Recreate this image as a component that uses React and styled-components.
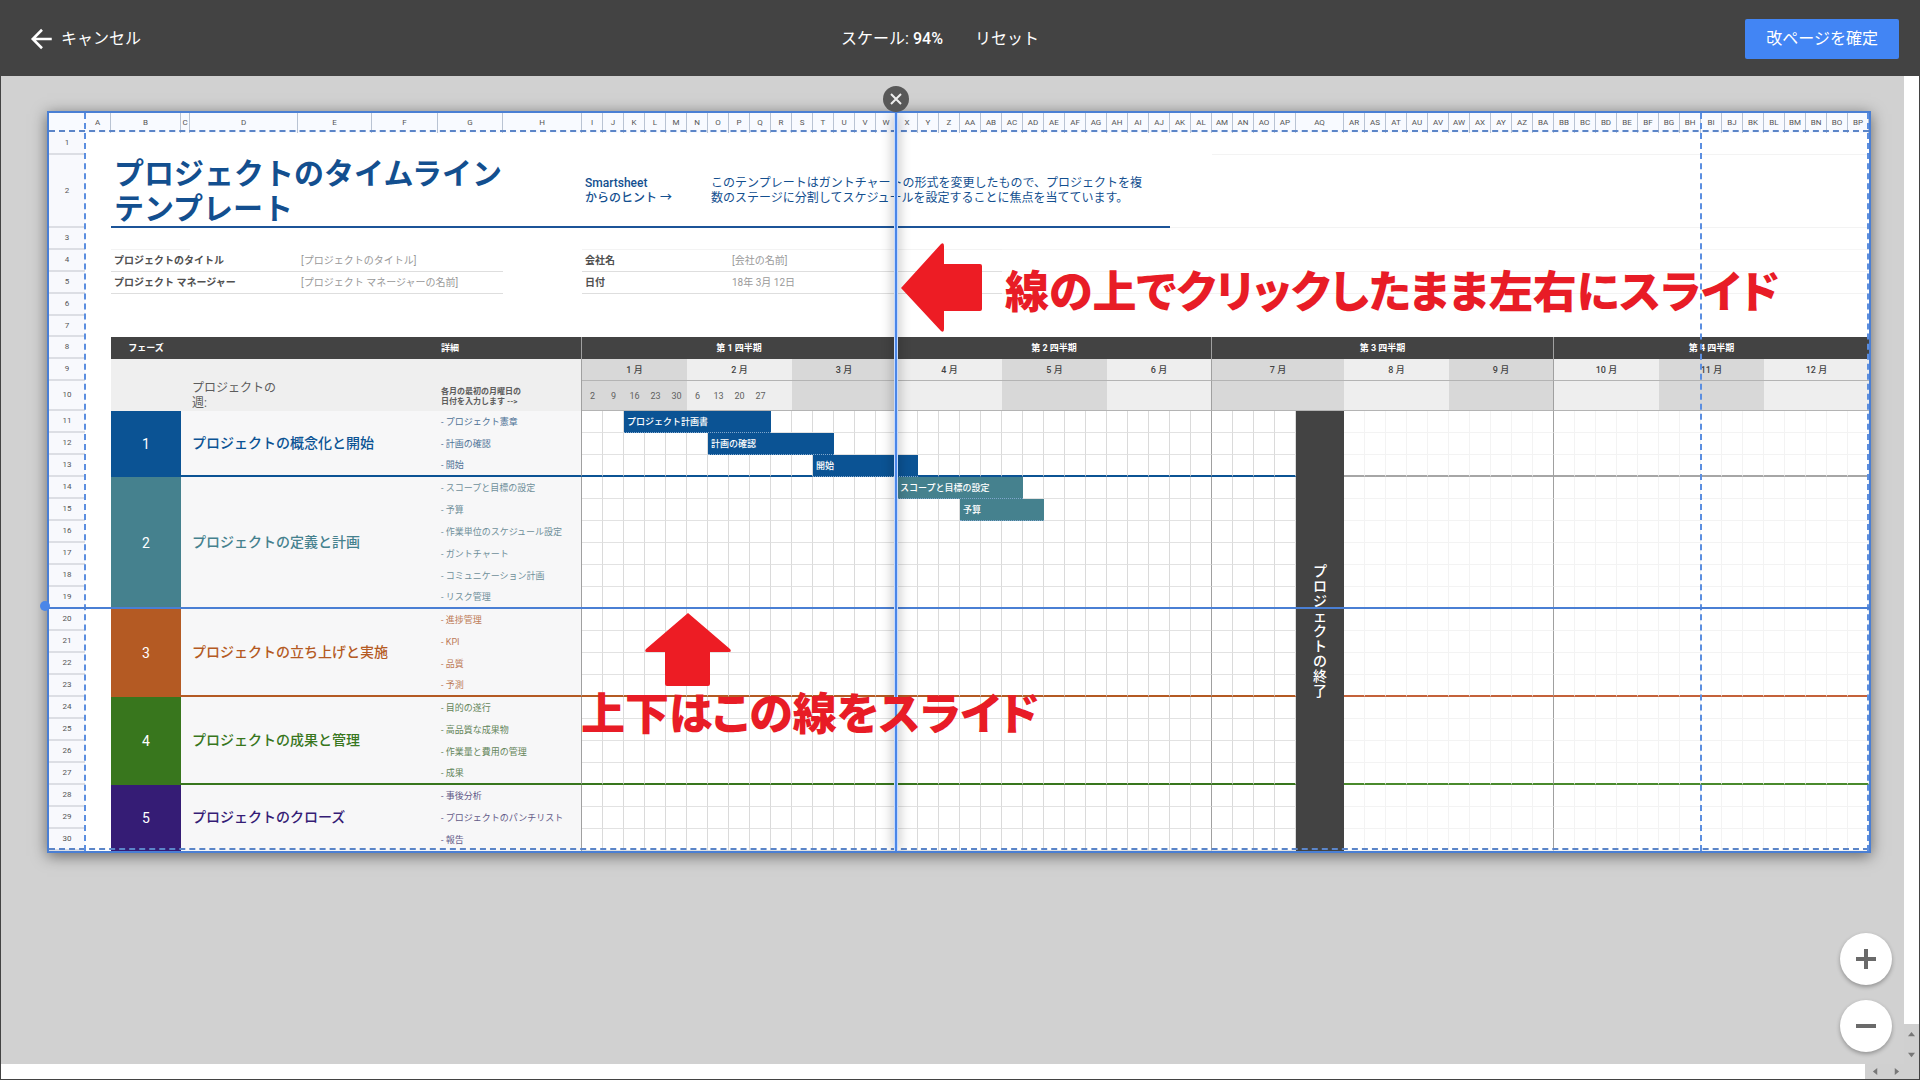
import React from "react";
import styled, { createGlobalStyle } from "styled-components";

const GlobalStyle = createGlobalStyle`
  *, *::before, *::after { box-sizing: border-box; }
  body {
    margin: 0;
    font-family: Roboto, "Noto Sans CJK JP", sans-serif;
    background: #434343;
  }
  button { font: inherit; border: 0; padding: 0; cursor: pointer; }
  h1, p { margin: 0; }
`;

/* ---------- sheet model ---------- */

const WEEK = 21;
const LEAD_COLUMNS = [
  ["A", 26], ["B", 70], ["C", 9], ["D", 108], ["E", 74], ["F", 66], ["G", 65], ["H", 79],
];

const columnName = (n) =>
  n <= 26
    ? String.fromCharCode(64 + n)
    : String.fromCharCode(64 + Math.floor((n - 1) / 26)) + String.fromCharCode(65 + ((n - 1) % 26));

const COLUMNS = [
  ...LEAD_COLUMNS,
  ...Array.from({ length: 60 }, (_, i) => {
    const name = columnName(i + 9);
    return [name, name === "AQ" ? 48 : WEEK];
  }),
];
const ROW_HEAD = 36;
const SHEET_WIDTH = ROW_HEAD + COLUMNS.reduce((sum, c) => sum + c[1], 0);
const pct = (x) => `${(x / SHEET_WIDTH) * 100}%`;

const QUARTERS = [
  { label: "第 1 四半期", span: 15 },
  { label: "第 2 四半期", span: 15 },
  { label: "第 3 四半期", span: 15 },
  { label: "第 4 四半期", span: 15 },
];
const DAYS = [2, 9, 16, 23, 30, 6, 13, 20, 27];

const PHASES = [
  {
    name: "プロジェクトの概念化と開始", color: "#0b5394", soft: "#4f7296", rest: "#a6a6a6",
    tasks: ["プロジェクト憲章", "計画の確認", "開始"],
  },
  {
    name: "プロジェクトの定義と計画", color: "#45818e", soft: "#6f8f9a", rest: "#45818e",
    tasks: ["スコープと目標の設定", "予算", "作業単位のスケジュール設定", "ガントチャート", "コミュニケーション計画", "リスク管理"],
  },
  {
    name: "プロジェクトの立ち上げと実施", color: "#b45a23", soft: "#bd7c58", rest: "#c4623a",
    tasks: ["進捗管理", "KPI", "品質", "予測"],
  },
  {
    name: "プロジェクトの成果と管理", color: "#38761d", soft: "#64855a", rest: "#4a8a2c",
    tasks: ["目的の遂行", "高品質な成果物", "作業量と費用の管理", "成果"],
  },
  {
    name: "プロジェクトのクローズ", color: "#351c75", soft: "#635a88", rest: "transparent",
    tasks: ["事後分析", "プロジェクトのパンチリスト", "報告"],
  },
];

const BARS = {
  11: { from: 2, span: 7, label: "プロジェクト計画書", color: "#0b5394" },
  12: { from: 6, span: 6, label: "計画の確認", color: "#0b5394" },
  13: { from: 11, span: 5, label: "開始", color: "#0b5394" },
  14: { from: 15, span: 6, label: "スコープと目標の設定", color: "#45818e" },
  15: { from: 18, span: 4, label: "予算", color: "#45818e" },
};
const END_COLUMN = 34;

/* ---------- frame ---------- */

const Page = styled.div`
  display: flex;
  flex-direction: column;
  height: 100vh;
  border: solid #434343;
  border-width: 0 1px 1px;
`;

const Toolbar = styled.header`
  display: grid;
  grid-template-columns: 1fr auto 1fr;
  align-items: center;
  height: 76px;
  flex: none;
  padding: 2px 20px 0 28px;
  background: #434343;
  color: #fff;
  font-size: 16px;
  line-height: 24px;
`;

const CancelButton = styled.button`
  display: flex;
  align-items: center;
  justify-self: start;
  gap: 6px;
  background: none;
  color: #fff;
`;

const ScaleGroup = styled.div`
  display: flex;
  gap: 32px;
  margin-right: 48px;
`;

const ScaleValue = styled.strong`
  font-weight: 500;
`;

const TextButton = styled.button`
  background: none;
  color: #fff;
`;

const ConfirmButton = styled.button`
  justify-self: end;
  height: 40px;
  padding: 0 21px;
  border-radius: 2px;
  background: #4285f4;
  color: #fff;
`;

const Workspace = styled.div`
  flex: 1;
  min-height: 0;
  display: grid;
  grid-template-columns: minmax(0, 1fr) 15px;
  grid-template-rows: minmax(0, 1fr) 15px;
  background: #d0d0d0;
`;

const Canvas = styled.main`
  position: relative;
  overflow: hidden;
  padding: 35px 33px 0 46px;
  background: #d1d1d1;
`;

const VerticalScroll = styled.div`
  display: flex;
  flex-direction: column;
  background: #fff;
`;

const HorizontalScroll = styled.div`
  grid-column: 1 / -1;
  display: flex;
  padding-right: 12px;
  background: #d0d0d0;
`;

const Track = styled.div`
  flex: 1;
  background: #fff;
`;

const ScrollButton = styled.button`
  display: flex;
  align-items: center;
  justify-content: center;
  width: ${(p) => (p.$wide ? "21px" : "15px")};
  height: ${(p) => (p.$wide ? "15px" : "20px")};
  background: #d0d0d0;
`;

const ZoomButtons = styled.div`
  position: absolute;
  right: 12px;
  bottom: 12px;
  display: flex;
  flex-direction: column;
  gap: 15px;
`;

const ZoomButton = styled.button`
  display: flex;
  align-items: center;
  justify-content: center;
  width: 52px;
  height: 52px;
  border-radius: 50%;
  background: #fff;
  box-shadow: 0 2px 4px rgba(0, 0, 0, 0.3);
`;

/* ---------- sheet ---------- */

const Sheet = styled.section`
  position: relative;
  border: 2px solid #4a7fd4;
  background: #fff;
  box-shadow: 0 3px 14px rgba(0, 0, 0, 0.5);
`;

const Grid = styled.table`
  width: 100%;
  table-layout: fixed;
  border-collapse: separate;
  border-spacing: 0;
  font-size: 9px;
  line-height: 12px;
  white-space: nowrap;

  td, th { padding: 0; font-weight: 400; }
`;

const Row = styled.tr`
  height: ${(p) => p.$height || 22}px;
`;

const ColumnHead = styled.th`
  height: 20px;
  border-right: 1px solid ${(p) => (p.$open ? "transparent" : "#b9c3d3")};
  background: #f8faff;
  color: #555;
  font-size: 8px;
`;

const RowHead = styled.th`
  border-bottom: 2px solid #dcdee4;
  background: #f8f9fd;
  color: #555;
  font-size: 8px;
  line-height: 10px;
`;

const Blank = styled.td`
  border-bottom: 1px solid ${(p) => p.$rule || "transparent"};
`;

const TitleCell = styled.td`
  padding-left: 3px !important;
  border-bottom: 2px solid #1c5498;
  text-align: left;
`;

const Title = styled.h1`
  color: #134f8f;
  font-size: 30px;
  font-weight: 700;
  line-height: 35px;
`;

const TipCell = styled(TitleCell)`
  color: #134f8f;
  font-size: 12px;
  font-weight: ${(p) => (p.$strong ? 500 : 400)} !important;
  line-height: 15px;
`;

const FieldLabel = styled.th`
  padding-left: 3px !important;
  border-bottom: 1px solid #dedede;
  color: #505050;
  font-size: 10px;
  font-weight: 700 !important;
  text-align: left;
`;

const FieldValue = styled.td`
  padding-left: 3px !important;
  border-bottom: 1px solid #dedede;
  color: #999;
  font-size: 10px;
`;

const BandHead = styled.th`
  padding-left: ${(p) => (p.$left ? 3 : 0)}px !important;
  border-right: ${(p) => (p.$edge ? "1px solid #a0a0a0" : "0")};
  background: #434343;
  color: #fff;
  font-weight: 700 !important;
  text-align: ${(p) => (p.$left ? "left" : "center")};
`;

const IntroCell = styled.td`
  padding-left: ${(p) => p.$indent || 3}px !important;
  padding-bottom: ${(p) => (p.$small ? 4 : 0)}px !important;
  border-right: ${(p) => (p.$edge ? "1px solid #a0a0a0" : "0")};
  background: #efefef;
  color: #5c5c5c;
  font-size: ${(p) => (p.$small ? 8 : 12)}px;
  font-weight: ${(p) => (p.$small ? 700 : 400)} !important;
  line-height: ${(p) => (p.$small ? 10 : 15)}px;
  vertical-align: bottom;
`;

const MonthHead = styled.th`
  border-right: ${(p) => (p.$edge ? "1px solid #a0a0a0" : "0")};
  border-bottom: 1px solid #b4b4b4;
  background: ${(p) => (p.$dark ? "#d8d8d8" : "#eee")};
  color: #434343;
  font-weight: 500 !important;
`;

const DayCell = styled.td`
  border-right: ${(p) => (p.$edge ? "1px solid #a0a0a0" : "0")};
  border-bottom: 1px solid #b4b4b4;
  background: ${(p) => (p.$dark ? "#d8d8d8" : "#eee")};
  color: #606060;
  text-align: center;
`;

const PhaseNumber = styled.td`
  background: ${(p) => p.$color};
  color: #fff;
  font-size: 14px;
  font-weight: 500;
  text-align: center;
`;

const PhaseName = styled.th`
  padding-left: 11px !important;
  border-bottom: 2px solid ${(p) => p.$color};
  background: #f7f7f8;
  color: ${(p) => p.$ink};
  font-size: 14px;
  font-weight: 500 !important;
  text-align: left;
`;

const TaskCell = styled.td`
  padding-left: 3px !important;
  border-right: 1px solid #a0a0a0;
  border-bottom: ${(p) => (p.$line ? `2px solid ${p.$line}` : "0")};
  background: #f7f7f8;
  color: ${(p) => p.$color};
`;

const WeekCell = styled.td`
  border-right: 1px solid ${(p) => (p.$edge ? "#a0a0a0" : p.$faint ? "#f3f3f3" : "#dadada")};
  border-bottom: ${(p) => (p.$line ? `2px solid ${p.$line}` : `1px solid ${p.$faint ? "#f3f3f3" : "#e2e2e2"}`)};
`;

const BarCell = styled.td`
  padding-left: 3px !important;
  border-bottom: 1px dotted #7fa6cc;
  background: ${(p) => p.$color};
  color: #fff;
  font-weight: 500 !important;
`;

const EndCell = styled.td`
  background: #434343;
  color: #fff;
`;

const StackedText = styled.p`
  width: 14px;
  margin: 0 auto;
  font-size: 14px;
  font-weight: 500;
  line-height: 15px;
  white-space: normal;
  line-break: anywhere;
`;

/* ---------- page breaks and notes lying over the sheet ---------- */

const DashedColumn = styled.div`
  position: absolute;
  top: 0;
  bottom: 0;
  left: ${(p) => pct(p.$x)};
  border-left: 2px dashed #5b8ee0;
  margin-left: -2px;
`;

const DashedRow = styled.div`
  position: absolute;
  left: 0;
  right: 0;
  top: ${(p) => p.$y}px;
  border-top: 2px dashed #5b85c8;
`;

const ColumnBreak = styled.div`
  position: absolute;
  top: 0;
  bottom: 0;
  left: ${(p) => pct(p.$x)};
  width: 4px;
  margin-left: -2px;
  border: solid #c6dafc;
  border-width: 0 1px;
  background: #4a86e8;
  box-shadow: 0 0 12px rgba(0, 0, 0, 0.45);
  clip-path: inset(0 -16px);
  cursor: col-resize;
`;

const RowBreak = styled.div`
  position: absolute;
  left: 0;
  right: 0;
  top: ${(p) => p.$y}px;
  height: 2px;
  background: #4a7fd4;
  cursor: row-resize;
`;

const RowKnob = styled.span`
  position: absolute;
  left: -9px;
  top: -6px;
  width: 10px;
  height: 10px;
  border-radius: 50%;
  background: #4a86e8;
`;

const RemoveBreak = styled.button`
  position: absolute;
  top: -27px;
  left: ${(p) => pct(p.$x)};
  display: flex;
  align-items: center;
  justify-content: center;
  width: 26px;
  height: 26px;
  margin-left: -13px;
  border-radius: 50%;
  background: #585858;
`;

const NoteArrow = styled.svg`
  position: absolute;
  left: ${(p) => pct(p.$x)};
  top: ${(p) => p.$y}px;
  fill: #ed1c24;
`;

const NoteText = styled.p`
  position: absolute;
  left: ${(p) => pct(p.$x)};
  top: ${(p) => p.$y}px;
  color: #e81c26;
  font-family: "Noto Sans CJK JP", sans-serif;
  font-size: 44px;
  font-weight: 900;
  font-feature-settings: "palt";
  line-height: 56px;
  white-space: nowrap;
`;

/* ---------- parts ---------- */

const SheetRow = ({ n, height, children }) => (
  <Row $height={height}>
    <RowHead scope="row">{n}</RowHead>
    <Blank />
    {children}
  </Row>
);

const isQuarterEdge = (i) => i === 14 || i === 29 || i === 44;
const isDark = (i) => Math.floor(i / 5) % 2 === 0;

function Weeks({ row, line, rest, first }) {
  const cells = [];
  const bar = BARS[row];
  for (let i = 0; i < 60; i += 1) {
    if (bar && i === bar.from) {
      cells.push(
        <BarCell key={i} colSpan={bar.span} $color={bar.color}>{bar.label}</BarCell>
      );
      i += bar.span - 1;
    } else if (i === END_COLUMN) {
      if (first) {
        cells.push(
          <EndCell key={i} rowSpan={20}>
            <StackedText>プロジェクトの終了</StackedText>
          </EndCell>
        );
      }
    } else {
      const after = i > END_COLUMN;
      cells.push(
        <WeekCell key={i} $faint={after} $edge={isQuarterEdge(i)} $line={after ? rest : line} />
      );
    }
  }
  return cells;
}

function PhaseRows() {
  let n = 10;
  return PHASES.map((phase, p) =>
    phase.tasks.map((task, t) => {
      n += 1;
      const last = t === phase.tasks.length - 1 && p < PHASES.length - 1;
      const line = last ? phase.color : undefined;
      return (
        <SheetRow key={n} n={n}>
          {t === 0 && (
            <>
              <PhaseNumber rowSpan={phase.tasks.length} $color={phase.color}>{p + 1}</PhaseNumber>
              <PhaseName
                colSpan={4}
                rowSpan={phase.tasks.length}
                $ink={phase.color}
                $color={p < PHASES.length - 1 ? phase.color : "transparent"}
              >
                {phase.name}
              </PhaseName>
            </>
          )}
          <TaskCell colSpan={2} $line={line} $color={phase.soft}>- {task}</TaskCell>
          <Weeks row={n} first={n === 11} line={line} rest={last ? phase.rest : undefined} />
        </SheetRow>
      );
    })
  );
}

function TimelineSheet() {
  return (
    <Grid>
      <colgroup>
        <col width={ROW_HEAD} />
        {COLUMNS.map(([name, width]) => <col key={name} width={width} />)}
      </colgroup>
      <thead>
        <tr>
          <ColumnHead as="td" $open />
          {COLUMNS.map(([name]) => <ColumnHead key={name} scope="col">{name}</ColumnHead>)}
        </tr>
      </thead>
      <tbody>
        <SheetRow n={1}>
          <Blank colSpan={37} />
          <Blank colSpan={30} $rule="#f3f3f3" />
        </SheetRow>
        <SheetRow n={2} height={73}>
          <TitleCell colSpan={7}>
            <Title>プロジェクトのタイムライン<br />テンプレート</Title>
          </TitleCell>
          <TipCell colSpan={6} $strong>Smartsheet<br />からのヒント →</TipCell>
          <TipCell colSpan={22}>
            このテンプレートはガントチャートの形式を変更したもので、プロジェクトを複<br />
            数のステージに分割してスケジュールを設定することに焦点を当てています。
          </TipCell>
          <Blank colSpan={32} $rule="#f3f3f3" />
        </SheetRow>
        <SheetRow n={3}>
          <Blank colSpan={2} $rule="#f3f3f3" />
          <Blank colSpan={5} />
          <Blank colSpan={20} $rule="#f3f3f3" />
          <Blank colSpan={40} $rule="#f6f6f6" />
        </SheetRow>
        <SheetRow n={4}>
          <FieldLabel colSpan={3} scope="row">プロジェクトのタイトル</FieldLabel>
          <FieldValue colSpan={3}>[プロジェクトのタイトル]</FieldValue>
          <Blank />
          <FieldLabel colSpan={7} scope="row">会社名</FieldLabel>
          <FieldValue colSpan={13}>[会社の名前]</FieldValue>
          <Blank colSpan={40} $rule="#f3f3f3" />
        </SheetRow>
        <SheetRow n={5}>
          <FieldLabel colSpan={3} scope="row">プロジェクト マネージャー</FieldLabel>
          <FieldValue colSpan={3}>[プロジェクト マネージャーの名前]</FieldValue>
          <Blank />
          <FieldLabel colSpan={7} scope="row">日付</FieldLabel>
          <FieldValue colSpan={13}>18年 3月 12日</FieldValue>
          <Blank colSpan={40} $rule="#f3f3f3" />
        </SheetRow>
        <SheetRow n={6}><Blank colSpan={67} /></SheetRow>
        <SheetRow n={7} height={21}><Blank colSpan={67} /></SheetRow>
        <SheetRow n={8}>
          <BandHead>フェーズ</BandHead>
          <BandHead colSpan={4} />
          <BandHead colSpan={2} $left $edge>詳細</BandHead>
          {QUARTERS.map((q, i) => (
            <BandHead key={q.label} colSpan={q.span} $edge={i < 3}>{q.label}</BandHead>
          ))}
        </SheetRow>
        <SheetRow n={9}>
          <IntroCell rowSpan={2} />
          <IntroCell colSpan={4} rowSpan={2} $indent={11}>プロジェクトの<br />週:</IntroCell>
          <IntroCell colSpan={2} rowSpan={2} $small $edge>
            各月の最初の月曜日の<br />日付を入力します --&gt;
          </IntroCell>
          {Array.from({ length: 12 }, (_, m) => (
            <MonthHead key={m} colSpan={5} $dark={m % 2 === 0} $edge={m < 11 && m % 3 === 2}>
              {m + 1} 月
            </MonthHead>
          ))}
        </SheetRow>
        <SheetRow n={10} height={30}>
          {Array.from({ length: 60 }, (_, i) => (
            <DayCell key={i} $dark={isDark(i)} $edge={isQuarterEdge(i)}>{DAYS[i]}</DayCell>
          ))}
        </SheetRow>
        <PhaseRows />
      </tbody>
    </Grid>
  );
}

const ScrollArrow = ({ points }) => (
  <svg width="7" height="7" viewBox="0 0 8 8" aria-hidden="true">
    <polygon points={points} fill="#777" />
  </svg>
);

export default function App() {
  return (
    <>
      <GlobalStyle />
      <Page lang="ja">
        <Toolbar>
          <CancelButton type="button">
            <svg width="26" height="26" viewBox="0 0 24 24" fill="none" stroke="#fff" strokeWidth="2.4" aria-hidden="true">
              <path d="M21 12H4M12 3.5L3.5 12l8.500 8.500" />
            </svg>
            キャンセル
          </CancelButton>
          <ScaleGroup>
            <span>スケール: <ScaleValue>94%</ScaleValue></span>
            <TextButton type="button">リセット</TextButton>
          </ScaleGroup>
          <ConfirmButton type="button">改ページを確定</ConfirmButton>
        </Toolbar>

        <Workspace>
          <Canvas>
            <Sheet>
              <TimelineSheet />
              <DashedRow $y={17} />
              <DashedRow $y={735} />
              <DashedColumn $x={37} />
              <DashedColumn $x={1653} />
              <DashedColumn $x={1820} />
              <RowBreak $y={494}><RowKnob /></RowBreak>
              <ColumnBreak $x={847} />
              <RemoveBreak type="button" $x={847} aria-label="改ページを削除">
                <svg width="12" height="12" viewBox="0 0 12 12" stroke="#eee" strokeWidth="2" aria-hidden="true">
                  <path d="M1 1l10 10M11 1L1 11" />
                </svg>
              </RemoveBreak>
              <NoteArrow $x={852} $y={130} width="81" height="89" viewBox="0 0 81 89" aria-hidden="true">
                <path d="M0 45L40 1q3-2 3 2V21H79q2 0 2 2V66q0 2-2 2H43V86q0 4-3 2Z" />
              </NoteArrow>
              <NoteText $x={956} $y={148}>線の上でクリックしたまま左右にスライド</NoteText>
              <NoteArrow $x={596} $y={500} width="86" height="73" viewBox="0 0 86 73" aria-hidden="true">
                <path d="M43 0L85 36q2 3-1 3H65V71q0 2-2 2H22q-2 0-2-2V39H2q-3 0-1-3Z" />
              </NoteArrow>
              <NoteText $x={532} $y={570}>上下はこの線をスライド</NoteText>
            </Sheet>
            <ZoomButtons>
              <ZoomButton type="button" aria-label="拡大">
                <svg width="20" height="20" viewBox="0 0 20 20" stroke="#6a6a6a" strokeWidth="4" aria-hidden="true">
                  <path d="M10 0v20M0 10h20" />
                </svg>
              </ZoomButton>
              <ZoomButton type="button" aria-label="縮小">
                <svg width="20" height="20" viewBox="0 0 20 20" stroke="#6a6a6a" strokeWidth="4" aria-hidden="true">
                  <path d="M0 10h20" />
                </svg>
              </ZoomButton>
            </ZoomButtons>
          </Canvas>
          <VerticalScroll>
            <Track />
            <ScrollButton type="button" aria-label="上へ"><ScrollArrow points="0,6 4,1 8,6" /></ScrollButton>
            <ScrollButton type="button" aria-label="下へ"><ScrollArrow points="0,2 4,7 8,2" /></ScrollButton>
          </VerticalScroll>
          <HorizontalScroll>
            <Track />
            <ScrollButton type="button" $wide aria-label="左へ"><ScrollArrow points="6,0 1,4 6,8" /></ScrollButton>
            <ScrollButton type="button" $wide aria-label="右へ"><ScrollArrow points="2,0 7,4 2,8" /></ScrollButton>
          </HorizontalScroll>
        </Workspace>
      </Page>
    </>
  );
}
